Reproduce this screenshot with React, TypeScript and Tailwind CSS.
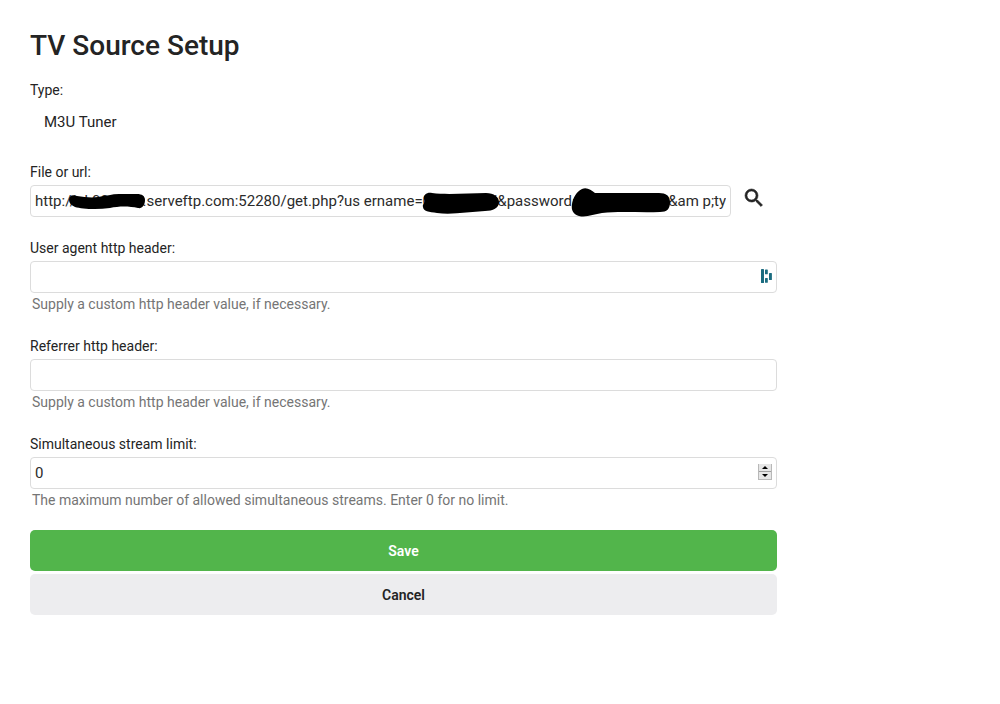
import { useState } from 'react';
import type { InputHTMLAttributes, ReactNode } from 'react';

const fieldClass =
  'block h-8 w-full rounded-[4px] border border-[#dcdcdc] bg-white px-1 text-[15px] text-[#2b2b2b] outline-none focus:border-[#52b54b]';

type FieldProps = InputHTMLAttributes<HTMLInputElement> & {
  id: string;
  label: string;
  help: string;
  adornment?: ReactNode;
};

function Field({ id, label, help, adornment, className = '', ...rest }: FieldProps) {
  return (
    <div>
      <label htmlFor={id} className="mb-[3px] block text-sm leading-5">
        {label}
      </label>
      <div className="relative">
        <input id={id} aria-describedby={`${id}-help`} className={`${fieldClass} ${className}`} {...rest} />
        {adornment}
      </div>
      <p id={`${id}-help`} className="mt-px px-[2px] text-sm leading-5 text-[#757575]">
        {help}
      </p>
    </div>
  );
}

function PasswordManagerMark() {
  return (
    <svg
      aria-hidden="true"
      viewBox="0 0 11 14"
      className="absolute right-[5px] top-2 h-[14px] w-[11px]"
      fill="#1b6c80"
    >
      <rect x="0" y="0" width="3" height="14" rx="0.6" />
      <rect x="4" y="0.5" width="2.8" height="4.8" rx="0.6" />
      <rect x="4" y="9" width="2.8" height="4.8" rx="0.6" />
      <rect x="8" y="4" width="2.9" height="7" rx="0.6" />
    </svg>
  );
}

const stepClass = 'flex h-[7px] w-full items-center justify-center bg-[#e6e6e6]';

export default function App() {
  const [url, setUrl] = useState(
    'http://ok000000.serveftp.com:52280/get.php?us ername=00000000ii&password=0000000000i&am p;type=m3u_plus&output=ts',
  );
  const [limit, setLimit] = useState(0);

  return (
    <main className="min-h-screen bg-white px-[30px] pt-7 pb-8 font-[Roboto,sans-serif] text-[#242424]">
      <form className="max-w-[747px]" onSubmit={(e) => e.preventDefault()}>
        <h1 className="text-[28px] leading-9 font-medium">TV Source Setup</h1>

        <div className="mt-4 mb-7">
          <p className="text-sm leading-5">Type:</p>
          <p className="mt-[10px] px-[14px] text-[15px] leading-6">M3U Tuner</p>
        </div>

        <div className="mb-[21px]">
          <label htmlFor="source-url" className="mb-[3px] block text-sm leading-5">
            File or url:
          </label>
          <div className="flex">
            <div className="relative min-w-0 flex-1">
              <input
                id="source-url"
                type="text"
                value={url}
                onChange={(e) => setUrl(e.target.value)}
                className={fieldClass}
              />
              <svg
                aria-hidden="true"
                viewBox="30 185 700 32"
                className="pointer-events-none absolute left-0 top-0 h-8 w-[700px] overflow-visible"
                fill="#000"
              >
                <path d="M69 200C69 196 72 194 77 196C84 197 91 198 98 197C106 196 112 194 119 194H137C142 194 145 196 145 200C145 205 142 209 138 208C129 206 119 206 110 208C97 210 82 209 75 207C71 205 69 203 69 200Z" />
                <path d="M424 199C423 195 427 192 432 193C448 195 469 193 486 193C494 193 499 197 499 202C499 208 493 211 485 211C469 212 451 215 437 213C429 212 423 211 423 207C422 204 426 203 424 199Z" />
                <path d="M572 204C573 198 576 192 582 189C587 187 591 190 595 193H659C666 193 670 196 670 202C670 209 667 212 660 212C641 213 621 211 602 213C594 214 586 218 579 216C573 214 571 210 572 204Z" />
              </svg>
            </div>
            <button
              type="button"
              aria-label="Browse"
              className="flex h-8 w-[46px] shrink-0 items-start justify-center pt-[1px]"
            >
              <svg
                aria-hidden="true"
                viewBox="0 0 24 24"
                className="h-6 w-6"
                fill="#242424"
                stroke="#242424"
                strokeWidth="0.6"
              >
                <path d="M15.5 14h-.79l-.28-.27A6.471 6.471 0 0 0 16 9.5 6.5 6.5 0 1 0 9.5 16c1.61 0 3.09-.59 4.23-1.57l.27.28v.79l5 4.99L20.49 19l-4.99-5zm-6 0C7.01 14 5 11.99 5 9.5S7.01 5 9.5 5 14 7.01 14 9.5 11.99 14 9.5 14z" />
              </svg>
            </button>
          </div>
        </div>

        <div className="flex flex-col gap-[22px]">
          <Field
            id="user-agent"
            type="text"
            label="User agent http header:"
            help="Supply a custom http header value, if necessary."
            adornment={<PasswordManagerMark />}
          />
          <Field
            id="referrer"
            type="text"
            label="Referrer http header:"
            help="Supply a custom http header value, if necessary."
          />
          <Field
            id="stream-limit"
            type="number"
            min={0}
            value={limit}
            onChange={(e) => setLimit(Number(e.target.value))}
            className="[appearance:textfield] [&::-webkit-inner-spin-button]:appearance-none"
            label="Simultaneous stream limit:"
            help="The maximum number of allowed simultaneous streams. Enter 0 for no limit."
            adornment={
              <div className="absolute right-[5px] top-[7px] flex w-[14px] flex-col gap-px border-x border-b border-[#b8b8b8] bg-[#a0a0a0]">
                <button type="button" aria-label="Increase" className={stepClass} onClick={() => setLimit(limit + 1)}>
                  <svg aria-hidden="true" viewBox="0 0 6 3" className="h-[3px] w-[6px]">
                    <path d="M0 3L3 0L6 3Z" />
                  </svg>
                </button>
                <button
                  type="button"
                  aria-label="Decrease"
                  className={stepClass}
                  onClick={() => setLimit(Math.max(0, limit - 1))}
                >
                  <svg aria-hidden="true" viewBox="0 0 6 3" className="h-[3px] w-[6px]">
                    <path d="M0 0H6L3 3Z" />
                  </svg>
                </button>
              </div>
            }
          />
        </div>

        <div className="mt-5 flex flex-col gap-[3px] text-sm font-semibold">
          <button type="submit" className="h-[41px] rounded-[5px] bg-[#52b54b] text-white">
            Save
          </button>
          <button type="button" className="h-[41px] rounded-[5px] bg-[#ededef]">
            Cancel
          </button>
        </div>
      </form>
    </main>
  );
}
